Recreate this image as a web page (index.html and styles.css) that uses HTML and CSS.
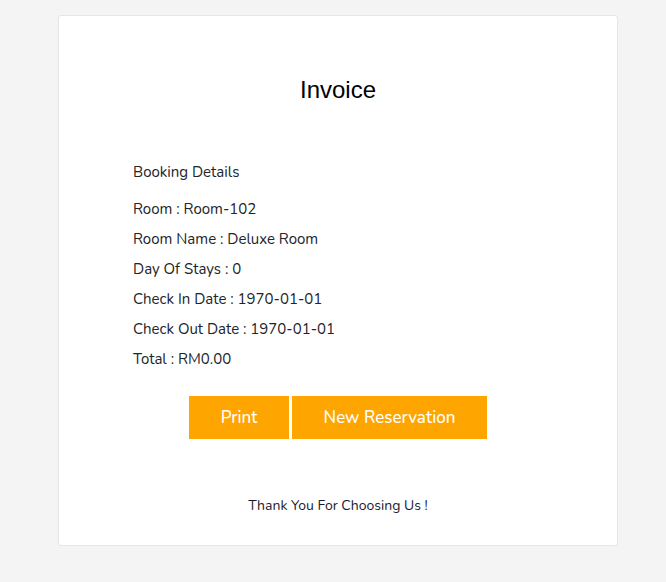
FILE: index.html
```html
<!DOCTYPE html>
<html>
<head>
<meta charset="utf-8">
<link rel="stylesheet" href="styles.css">
</head>
<body>
<div class="card">
  <h1 class="title">Invoice</h1>
  <div class="details">
    <p class="heading">Booking Details</p>
    <p class="row">Room : Room-102</p>
    <p class="row">Room Name : Deluxe Room</p>
    <p class="row">Day Of Stays : 0</p>
    <p class="row">Check In Date : 1970-01-01</p>
    <p class="row">Check Out Date : 1970-01-01</p>
    <p class="row">Total : RM0.00</p>
  </div>
  <div class="actions">
    <button class="btn btn-print">Print</button>
    <button class="btn btn-new">New Reservation</button>
  </div>
  <p class="thanks">Thank You For Choosing Us !</p>
</div>
</body>
</html>
```

FILE: styles.css
```css
html, body {
  margin: 0;
  padding: 0;
}
body {
  background: #f4f4f4;
  padding: 15px 0 0 58px;
  font-family: "Nunito", "Lato", "Noto Sans", sans-serif;
  color: #212529;
}
.card {
  box-sizing: border-box;
  width: 560px;
  height: 531px;
  background: #fff;
  border: 1px solid #e6e6e6;
  border-radius: 3px;
  padding: 60px 0 0 0;
}
.title {
  margin: 0;
  text-align: center;
  font-family: "Liberation Sans", Arial, sans-serif;
  font-weight: 400;
  font-size: 24px;
  line-height: 28px;
  color: #000;
}
.details {
  padding-left: 74px;
  margin-top: 53px;
}
.details p {
  margin: 0;
  font-size: 15px;
  line-height: 30px;
}
.heading {
  margin-bottom: 7px !important;
}
.actions {
  display: flex;
  justify-content: center;
  gap: 3px;
  margin-top: 22px;
}
.btn {
  border: none;
  background: #ffa500;
  color: #fff;
  font-family: "Nunito", "Lato", "Noto Sans", sans-serif;
  font-size: 17px;
  font-weight: 500;
  height: 43px;
  padding: 0;
  cursor: pointer;
}
.btn-print {
  width: 100px;
}
.btn-new {
  width: 195px;
}
.thanks {
  margin: 57px 0 0 0;
  text-align: center;
  font-size: 14px;
  line-height: 20px;
  color: #1a1a2e;
}
```
